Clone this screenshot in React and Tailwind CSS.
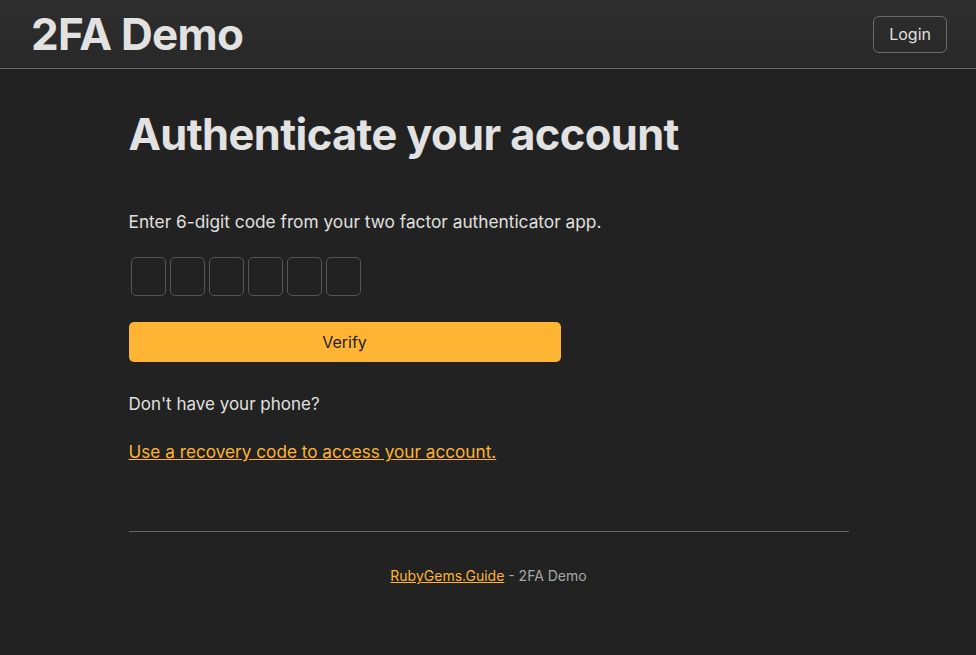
import React from "react";

function CodeInputs() {
  return (
    <div className="flex gap-[4px] ml-[2px]">
      {[0, 1, 2, 3, 4, 5].map((i) => (
        <input
          key={i}
          type="text"
          maxLength={1}
          className="w-[35px] h-[39px] bg-[#222222] border border-[#555555] rounded-[5px] text-center text-[#e0e0e0] outline-none"
        />
      ))}
    </div>
  );
}

export default function App() {
  return (
    <div
      className="min-h-[655px] bg-[#222222] text-[#e0e0e0]"
      style={{ fontFamily: "Inter, 'Noto Sans', sans-serif" }}
    >
      {/* Header */}
      <header className="h-[69px] bg-gradient-to-b from-[#2e2e2e] to-[#282828] border-b border-[#6a6a6a] flex items-center justify-between pl-[31px] pr-[29px]">
        <h1 className="text-[44px] font-bold tracking-[-0.7px] text-[#e2e2e2] leading-none">2FA Demo</h1>
        <button className="h-[37px] px-[15px] border border-[#6a6a6a] rounded-[6px] text-[16px] text-[#e0e0e0]">
          Login
        </button>
      </header>

      {/* Main */}
      <main className="w-[721px] mx-auto pl-[1px]">
        <h2 className="mt-[39px] text-[43.4px] font-bold tracking-[-0.6px] leading-[1.2] text-[#e2e2e2]">
          Authenticate your account
        </h2>

        <p className="mt-[50px] text-[17.3px] leading-[24px]">
          Enter 6-digit code from your two factor authenticator app.
        </p>

        <div className="mt-[23px]">
          <CodeInputs />
        </div>

        <button className="mt-[26px] w-[432px] h-[40px] bg-[#ffb433] rounded-[5px] text-[16px] text-[#222222]">
          Verify
        </button>

        <p className="mt-[30px] text-[17px] leading-[24px]">Don't have your phone?</p>

        <p className="mt-[24px] text-[17.2px] leading-[24px]">
          <a href="#" className="text-[#ffb433] underline">
            Use a recovery code to access your account.
          </a>
        </p>

        <hr className="mt-[67px] border-t border-[#666666]" />

        <footer className="mt-[33px] text-center text-[14px] text-[#a8a8a8]">
          <a href="#" className="text-[#ffb433] underline">
            RubyGems.Guide
          </a>{" "}
          - 2FA Demo
        </footer>
      </main>
    </div>
  );
}
